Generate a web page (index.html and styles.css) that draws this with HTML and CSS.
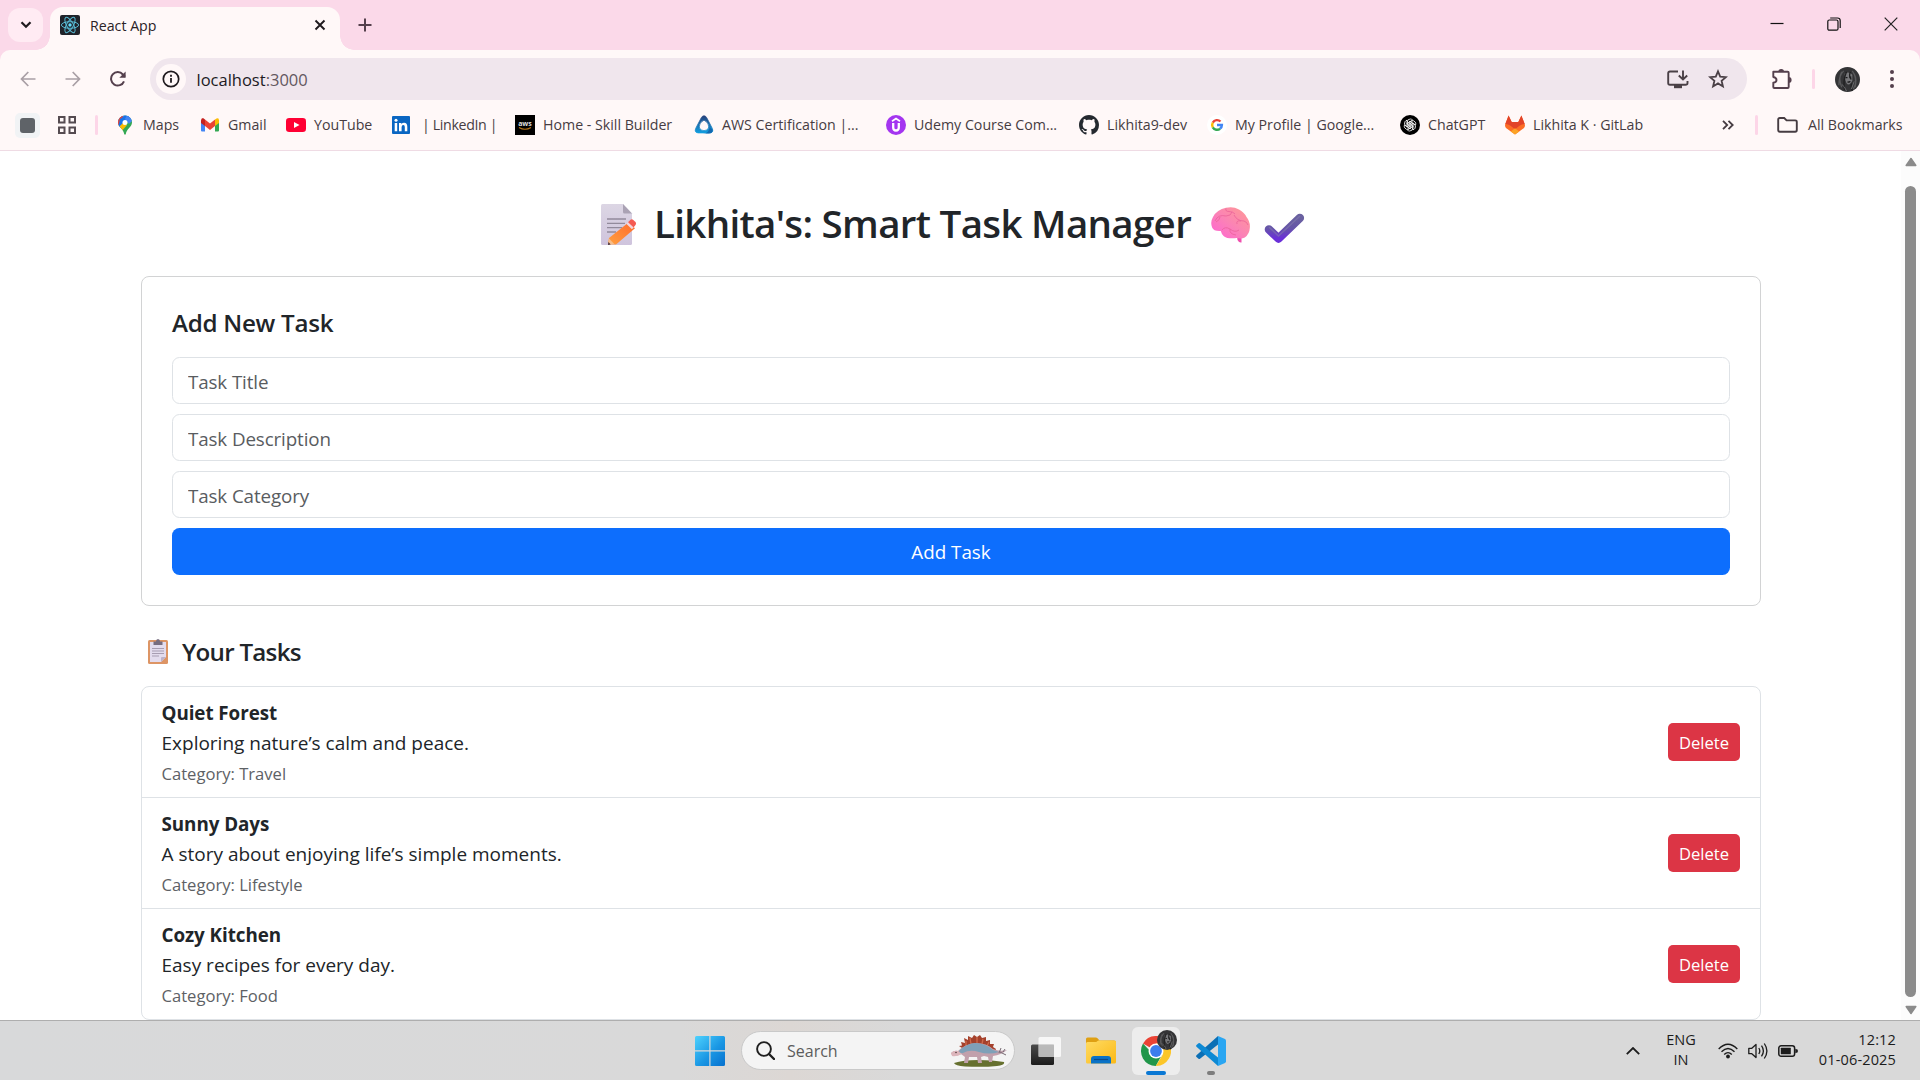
FILE: index.html
```
<!DOCTYPE html>
<html lang="en">
<head>
<meta charset="utf-8">
<title>React App</title>
<link rel="stylesheet" href="styles.css">
</head>
<body>
<svg class="defs" width="0" height="0" aria-hidden="true">
  <defs>
    <symbol id="avatar" viewBox="0 0 26 26">
      <circle cx="13" cy="13" r="13" fill="#343436"/>
      <path d="M9 4Q4 9 4 19M7 5Q3 12 7 21M18 4Q23 11 21 21M20 7Q24 14 19 23" stroke="#5a5a5c" stroke-width="1.300" fill="none"/>
      <path d="M10 7Q14 4 18 8L18 14Q16 19 13 18Q10 15 10 7Z" fill="#77777a"/>
      <path d="M12 5Q8 14 10 24M16 5Q14 10 17 13M17 17Q16 21 18 25" stroke="#202021" stroke-width="1.400" fill="none"/>
      <path d="M11 11h2M15 10.500h2M13 15.500q2 .6 3-.5" stroke="#19191a" stroke-width="1.200"/>
      <path d="M7 18Q10 20 12 25M20 15L17 23" stroke="#6c6c6e" stroke-width="1" fill="none"/>
    </symbol>
    <linearGradient id="brain" x1="1" y1="0" x2="0" y2="1"><stop offset="0" stop-color="#ff9a92"/><stop offset=".5" stop-color="#fb84b4"/><stop offset="1" stop-color="#ff62d6"/></linearGradient>
    <linearGradient id="tick" x1="0" y1="0" x2="0" y2="1"><stop offset="0" stop-color="#6a61a0"/><stop offset=".5" stop-color="#6655a8"/><stop offset="1" stop-color="#6a30d8"/></linearGradient>
    <linearGradient id="paper" x1="0" y1="0" x2="0" y2="1"><stop offset="0" stop-color="#dcd6e4"/><stop offset="1" stop-color="#cfc4dd"/></linearGradient>
    <linearGradient id="pencil" x1="1" y1="0" x2="0" y2="1"><stop offset="0" stop-color="#ff6a2c"/><stop offset="1" stop-color="#ffa040"/></linearGradient>
    <linearGradient id="win" x1="0" y1="0" x2="1" y2="1"><stop offset="0" stop-color="#4fd2fd"/><stop offset=".55" stop-color="#1a97e4"/><stop offset="1" stop-color="#0670ce"/></linearGradient>
    <linearGradient id="folder" x1="0" y1="0" x2="1" y2="1"><stop offset="0" stop-color="#ffdb63"/><stop offset="1" stop-color="#fbb916"/></linearGradient>
    <linearGradient id="dark" x1="0" y1="0" x2="0" y2="1"><stop offset="0" stop-color="#4a4a4a"/><stop offset="1" stop-color="#1c1c1c"/></linearGradient>
    <linearGradient id="cert" x1="0" y1="0" x2="0" y2="1"><stop offset="0" stop-color="#26417c"/><stop offset="1" stop-color="#119ee0"/></linearGradient>
  </defs>
</svg>

<header class="browser">
  <div class="tabstrip">
    <div class="tab-search"><svg width="12" height="8" viewBox="0 0 12 8"><path d="M1.5 1.2L6 5.8l4.500-4.600" fill="none" stroke="#1f1a1e" stroke-width="2.200"/></svg></div>
    <div class="tab">
      <svg width="20" height="20" viewBox="0 0 20 20"><rect width="20" height="20" rx="2" fill="#20232a"/><g fill="none" stroke="#58b9d2" stroke-width="1"><ellipse cx="10" cy="10" rx="8.600" ry="3.300"/><ellipse cx="10" cy="10" rx="8.600" ry="3.300" transform="rotate(60 10 10)"/><ellipse cx="10" cy="10" rx="8.600" ry="3.300" transform="rotate(120 10 10)"/></g><circle cx="10" cy="10" r="1.700" fill="#61dafb"/></svg>
      <span class="tab-title">React App</span>
      <svg width="12" height="12" viewBox="0 0 12 12"><path d="M1.500 1.500l9 9M10.500 1.500l-9 9" stroke="#1f1a1e" stroke-width="1.900"/></svg>
    </div>
    <svg class="new-tab" width="14" height="14" viewBox="0 0 14 14"><path d="M7 .5v13M.5 7h13" stroke="#55404d" stroke-width="2"/></svg>
    <div class="window-buttons">
      <svg width="14" height="14" viewBox="0 0 14 14"><path d="M.5 6.500h13" stroke="#111" stroke-width="1.200"/></svg>
      <svg width="14" height="14" viewBox="0 0 14 14"><g fill="none" stroke="#111" stroke-width="1.200"><rect x=".8" y="3" width="10.200" height="10.200" rx="1.500"/><path d="M3.200 1h7.300q2.700 0 2.700 2.700v7.300"/></g></svg>
      <svg width="14" height="14" viewBox="0 0 14 14"><path d="M.7.7l12.600 12.600M13.300.7L.7 13.300" stroke="#222" stroke-width="1.200"/></svg>
    </div>
  </div>

  <div class="toolbar">
    <svg class="nav" width="16" height="16" viewBox="0 0 16 16"><path d="M15.500 8H1.500M8.300 1L1.500 8l6.800 7" fill="none" stroke="#a99fa5" stroke-width="1.700"/></svg>
    <svg class="nav" width="16" height="16" viewBox="0 0 16 16"><path d="M.5 8h14M7.700 1l6.800 7-6.800 7" fill="none" stroke="#a99fa5" stroke-width="1.700"/></svg>
    <svg class="nav" width="16" height="16" viewBox="0 0 16 16"><path d="M14 10.300A6.700 6.700 0 1 1 12.900 3.500L15 5.700" fill="none" stroke="#55404d" stroke-width="2"/><path d="M15.600.5v6.300H9.300z" fill="#55404d"/></svg>
    <div class="omnibox">
      <div class="info"><svg width="18" height="18" viewBox="0 0 18 18"><circle cx="9" cy="9" r="7.700" fill="none" stroke="#1f1a1e" stroke-width="1.700"/><path d="M9 8v4.800M9 4.800v1.900" stroke="#1f1a1e" stroke-width="1.800"/></svg></div>
      <span class="url">localhost<span>:3000</span></span>
      <svg width="22" height="19" viewBox="0 0 22 19"><path d="M11 1.500H3Q1.200 1.500 1.200 3.300v9.600q0 1.800 1.800 1.800h15.500q2 0 2-1.800v-2M16 .5v8.500M11.800 5.500L16 9.500l4.200-4" fill="none" stroke="#4a4046" stroke-width="1.900"/><path d="M7 15h8v3.200H7z" fill="#4a4046"/></svg>
      <svg class="star" width="20" height="20" viewBox="0 0 20 20"><path d="M10 2.300l2.200 5.300 5.700.5-4.300 3.700 1.300 5.600-4.900-3-4.900 3 1.300-5.600L2.100 8.100l5.700-.5z" fill="none" stroke="#4a4046" stroke-width="1.800"/></svg>
    </div>
    <svg class="puzzle" width="22" height="22" viewBox="0 0 22 22"><path d="M2.300 3.800h14.400q1 0 1 1V19q0 1-1 1H3.300q-1 0-1-1v-4.300Q5.500 14.300 5.500 12T2.300 9z" fill="none" stroke="#55404d" stroke-width="1.900" stroke-linejoin="round"/><path d="M7.300 3.800a2.900 2.900 0 0 1 5.800 0zM17.700 9a2.900 2.900 0 0 1 0 5.800z" fill="#55404d"/></svg>
    <i class="divider"></i>
    <svg class="profile" width="25" height="25"><use href="#avatar"/></svg>
    <svg width="4" height="18" viewBox="0 0 4 18" fill="#55404d"><circle cx="2" cy="2" r="2"/><circle cx="2" cy="9" r="2"/><circle cx="2" cy="16" r="2"/></svg>
  </div>

  <nav class="bookmarks">
    <span class="group"><i></i></span>
    <svg width="18" height="18" viewBox="0 0 18 18" fill="none" stroke="#554b50" stroke-width="2"><path d="M1 1h5.500v5.500H1zM11.500 1H17v5.500h-5.500zM1 11.500h5.500V17H1zM11.500 11.500H17V17h-5.500z"/></svg>
    <i class="divider"></i>
    <a><svg width="20" height="20" viewBox="0 0 20 20"><clipPath id="pin"><path d="M10 .5a7 7 0 0 1 7 7c0 4.500-5.500 6-6.300 12h-1.400C8.500 13.500 3 12 3 7.500a7 7 0 0 1 7-7z"/></clipPath><g clip-path="url(#pin)"><path d="M0 0h20v20H0z" fill="#34a853"/><path d="M0 0h20L3 16H0z" fill="#4285f4"/><path d="M0 0h7l3 6-7 6z" fill="#ea4335"/><path d="M3 13L15 1 10 .5 5 4z" fill="#1a73e8"/><path d="M3 13l5-5 4 2-6 7z" fill="#fbbc04"/><path d="M12 0l6 5-4 4-4-5z" fill="#4285f4"/></g><circle cx="10" cy="7.500" r="2.500" fill="#fff"/></svg><span>Maps</span></a>
    <a><svg width="20" height="20" viewBox="0 0 20 20"><path d="M1 5v10.500q0 1 1 1h3V8z" fill="#4285f4"/><path d="M15 8v8.500h3q1 0 1-1V5z" fill="#34a853"/><path d="M1 5.500Q1 3 3 3l2 1.500V11L1 8z" fill="#c5221f"/><path d="M5 4.500l5 4 5-4V11l-5 4-5-4z" fill="#ea4335"/><path d="M15 4.500Q19 1.500 19 5.500V8l-4 3z" fill="#fbbc04"/></svg><span>Gmail</span></a>
    <a><svg width="20" height="20" viewBox="0 0 20 20"><rect y="3" width="20" height="14" rx="3.200" fill="#ff0033"/><path d="M8 7l5.500 3L8 13z" fill="#fff"/></svg><span>YouTube</span></a>
    <a class="linkedin"><svg width="20" height="20" viewBox="0 0 20 20"><rect x="1" y="1" width="18" height="18" rx="1" fill="#0a66c2"/><path d="M3.700 8h2.500v8.300H3.700zM8 8h2.400v1.200q.8-1.400 2.700-1.400 3.200 0 3.200 4v4.500h-2.500v-4.200q0-2.100-1.500-2.100-1.700 0-1.700 2.200v4.100H8z" fill="#fff"/><circle cx="5" cy="5.300" r="1.500" fill="#fff"/></svg><span>| LinkedIn |</span></a>
    <a><svg width="20" height="20" viewBox="0 0 20 20"><path d="M0 0h20v20H0z" fill="#000"/><text x="10" y="11" text-anchor="middle" class="aws">aws</text><path d="M4 12.500q6 3.500 12 0" fill="none" stroke="#b87416" stroke-width="1.200"/></svg><span>Home - Skill Builder</span></a>
    <a><svg width="20" height="20" viewBox="0 0 20 20"><path d="M10 .8q1.700 0 2.700 1.900l5.500 10.500q1.900 4.300-2.400 4.700H4.200Q-.1 17.500 1.800 13.200L7.300 2.700Q8.300.8 10 .8zM10 5Q4.800 7.800 5.200 12q.5 3.700 4.800 3.700t4.800-3.700Q15.200 7.800 10 5z" fill="url(#cert)" fill-rule="evenodd" stroke="url(#cert)" stroke-width=".8"/><path d="M18.600 14.500q.6 4-4 4H9q6 0 6.500-6z" fill="#1268b0"/></svg><span>AWS Certification |...</span></a>
    <a><svg width="20" height="20" viewBox="0 0 20 20"><circle cx="10" cy="10" r="10" fill="#a435f0"/><path d="M6 6.200l4-2.700 4 2.700" fill="none" stroke="#fff" stroke-width="1.700"/><path d="M7.200 8v4.500q0 3 2.800 3t2.800-3V8" fill="none" stroke="#fff" stroke-width="2.300"/></svg><span>Udemy Course Com...</span></a>
    <a><svg width="20" height="20" viewBox="0 0 16 16"><path fill="#24292f" d="M8 0C3.580 0 0 3.580 0 8c0 3.540 2.290 6.530 5.470 7.590.4.070.55-.17.55-.38 0-.19-.01-.82-.01-1.490-2.010.37-2.530-.49-2.690-.94-.09-.23-.48-.94-.82-1.130-.28-.15-.68-.52-.01-.53.63-.01 1.080.58 1.230.82.720 1.210 1.870.87 2.330.66.070-.52.280-.87.510-1.070-1.780-.2-3.640-.89-3.640-3.950 0-.87.310-1.590.82-2.150-.08-.2-.36-1.020.08-2.120 0 0 .67-.21 2.200.82.640-.18 1.320-.27 2-.27s1.360.09 2 .27c1.530-1.040 2.200-.82 2.200-.82.44 1.100.16 1.920.08 2.120.51.560.82 1.270.82 2.150 0 3.070-1.870 3.750-3.650 3.950.29.250.54.730.54 1.480 0 1.070-.01 1.930-.01 2.200 0 .21.150.46.55.38A8.010 8.010 0 0 0 16 8c0-4.420-3.580-8-8-8z"/></svg><span>Likhita9-dev</span></a>
    <a><svg width="20" height="20" viewBox="0 0 20 20"><circle cx="10" cy="10" r="10" fill="#fff"/><g fill="none" stroke-width="2.400"><path d="M13.500 6.500A4.900 4.900 0 0 0 5.800 7.600" stroke="#ea4335"/><path d="M5.800 7.600a4.900 4.900 0 0 0 0 4.800" stroke="#fbbc04"/><path d="M5.800 12.400a4.900 4.900 0 0 0 7.300 1.300" stroke="#34a853"/><path d="M13.100 13.700Q14.900 12.200 14.900 10H10" stroke="#4285f4"/></g></svg><span>My Profile | Google...</span></a>
    <a><svg width="20" height="20" viewBox="0 0 20 20"><circle cx="10" cy="10" r="10" fill="#000"/><g fill="none" stroke="#fff" stroke-width=".8"><g id="petal"><path d="M7.200 12.500V7.300Q7.300 4 10.300 4q1.500.1 2.400 1.100L9 7.300v4"/></g><use href="#petal" transform="rotate(60 10 10)"/><use href="#petal" transform="rotate(120 10 10)"/><use href="#petal" transform="rotate(180 10 10)"/><use href="#petal" transform="rotate(240 10 10)"/><use href="#petal" transform="rotate(300 10 10)"/></g></svg><span>ChatGPT</span></a>
    <a><svg width="20" height="20" viewBox="0 0 20 20"><path d="M10 19.500L1 13Q-.5 11.500.3 9L3.600.5 6.700 7h6.600L16.400.5 19.700 9q.8 2.500-.7 4z" fill="#fc6d26"/><path d="M.3 9L3.600.5 6.700 7h6.600L16.400.5 19.700 9q-3 .2-5.200 1.800L10 14.300l-4.500-3.500Q3.300 9.200.3 9z" fill="#e24329"/><path d="M10 13.200l4.300 3.200L10 19.500l-4.300-3.100z" fill="#fca326"/></svg><span>Likhita K · GitLab</span></a>
    <svg class="more" width="12" height="10" viewBox="0 0 12 10"><path d="M1 .8L5.200 5 1 9.200M6.500.8L10.700 5 6.500 9.200" fill="none" stroke="#463c42" stroke-width="1.800"/></svg>
    <i class="divider"></i>
    <span class="all"><svg width="21" height="16" viewBox="0 0 21 16"><path d="M1.200 13V2.500Q1.200 1 2.800 1h4.400l2.400 2.400h8.600q1.600 0 1.600 1.500V13q0 1.700-1.600 1.700H2.800Q1.200 14.700 1.200 13z" fill="none" stroke="#463c42" stroke-width="1.900"/></svg><span>All Bookmarks</span></span>
  </nav>
</header>

<div class="viewport">
  <main class="page">
    <h1>
      <svg class="memo" width="35" height="41" viewBox="0 0 35 41"><path d="M0 1.500Q0 0 1.500 0H22l9 9.500V39.500Q31 41 29.500 41h-28Q0 41 0 39.500z" fill="url(#paper)"/><path d="M22 0l9 9.500h-7.500Q22 9.500 22 8z" fill="#aaa2b4"/><path d="M6 15h19M6 19.300h18M6 23.600h15M6 28h9" stroke="#928a9c" stroke-width="1.300"/><path d="M27.500 18.500l6.500 5.700L15 40.500 7 40l1-6z" fill="url(#pencil)"/><path d="M27 18.200l2.500-2.500q1.500-1 2.800.2l2.200 2.200q1 1.500 0 2.800L32 24z" fill="#f55b52"/><path d="M25.300 19.800l1.700-1.600 5.700 5.300-1.800 1.800z" fill="#f3d6dc"/><path d="M8 34.500l5.500 5.700L7 41z" fill="#f6bd8a"/><path d="M7.400 38l2.300 2.600L7 41z" fill="#42303f"/></svg>
      <span>Likhita's: Smart Task Manager</span>
      <svg class="brain" width="40" height="36" viewBox="0 0 40 36"><path d="M26 29l4.500 1v5.500Q28 36 26.500 33z" fill="#f04fae"/><path d="M15 .8Q22-1 28 2.500q5 2.500 7.500 7.500 4 5 3.300 11-.3 6-5 9.500-3 1.500-8 .5-5 .5-9.500 0-5-1.500-6.500-7-7 .5-8.700-3.500Q-1 15 2 10 6 2.500 15 .8z" fill="url(#brain)"/><path d="M4 14q3-7 11-5 5 0 6-4M15 1.500q-1 3 3 3t6 2.500M23 8q3 6 10 6 3 1 4 4M30 14q-5-1-4 3M11 23q3-4 8-1 5 4 9 1M19 22q-1 5 6 6M9 10q0 3-4 5" fill="none" stroke="#ea6098" stroke-width="1" opacity=".75"/></svg>
      <svg class="tick" width="41" height="31" viewBox="0 0 41 31"><path d="M5 16.500l9.500 9L35.800 5" fill="none" stroke="url(#tick)" stroke-width="8.600" stroke-linecap="round" stroke-linejoin="round"/><path d="M5.500 14.500l9 8.500L35.500 3.500" fill="none" stroke="#8880b0" stroke-width="1.500" stroke-linecap="round" opacity=".5"/></svg>
    </h1>

    <form class="card">
      <h2>Add New Task</h2>
      <input type="text" placeholder="Task Title">
      <input type="text" placeholder="Task Description">
      <input type="text" placeholder="Task Category">
      <button type="button">Add Task</button>
    </form>

    <h2 class="list-title">
      <svg width="20" height="25" viewBox="0 0 20 25"><rect y="1" width="20" height="24" rx="1.500" fill="#dd9565"/><path d="M2 3h16v15l-5 5H2z" fill="#e3dcee"/><path d="M18 18l-5 5v-4q0-1 1-1z" fill="#bdb2ca"/><path d="M5.500 2.500H8Q8 0 10 0t2 2.500h2.500V6h-9z" fill="#776d80"/><path d="M4 9.500h12M4 12h12M4 14.500h12M4 17h7" stroke="#a79db2" stroke-width="1"/></svg>
      <span>Your Tasks</span>
    </h2>
    <ul class="tasks">
      <li><div><strong>Quiet Forest</strong><p>Exploring nature’s calm and peace.</p><small>Category: Travel</small></div><button type="button">Delete</button></li>
      <li><div><strong>Sunny Days</strong><p>A story about enjoying life’s simple moments.</p><small>Category: Lifestyle</small></div><button type="button">Delete</button></li>
      <li><div><strong>Cozy Kitchen</strong><p>Easy recipes for every day.</p><small>Category: Food</small></div><button type="button">Delete</button></li>
    </ul>
  </main>
  <div class="scrollbar">
    <svg width="12" height="10" viewBox="0 0 12 10"><path d="M6 1.500L10.800 8.500H1.200z" fill="#8b8b8b" stroke="#8b8b8b" stroke-width="1.500" stroke-linejoin="round"/></svg>
    <i></i>
    <svg width="12" height="10" viewBox="0 0 12 10"><path d="M6 8.500L1.200 1.500h9.600z" fill="#8b8b8b" stroke="#8b8b8b" stroke-width="1.500" stroke-linejoin="round"/></svg>
  </div>
</div>

<footer class="taskbar">
  <div class="apps">
    <svg width="30" height="30" viewBox="0 0 30 30"><path d="M1.500 0h12.800v14.300H0V1.500Q0 0 1.500 0zM15.500 0h13Q30 0 30 1.500v12.800H15.500zM0 15.500h14.300V30H1.500Q0 30 0 28.500zM15.500 15.500H30v13q0 1.500-1.500 1.500h-13z" fill="url(#win)"/></svg>
    <div class="search">
      <svg width="19" height="19" viewBox="0 0 19 19"><circle cx="8" cy="8" r="6.900" fill="none" stroke="#1f1f1f" stroke-width="1.900"/><path d="M13 13l5 5" stroke="#1f1f1f" stroke-width="2.400" stroke-linecap="round"/></svg>
      <span>Search</span>
      <svg width="57" height="32" viewBox="0 0 57 32"><path d="M3 28q9-3 24-3t26 2q1 3-7 4-15 1.500-32 .4-10-.6-11-3.400z" fill="#66702f"/><path d="M11 13l-3-2 3-.5-1-3.500 4 1-1-5 4 2 0-4 4 2 2-3 3 2 3-2 2 3 4-1 0 4 4-1 0 4 4 0-1 3 3 2-1 3q-15-8-30-2z" fill="#a4412c"/><path d="M15 11l0-5M20 9l-1-6M26 8V2M31 9l1-5M36 11l2-4" stroke="#cf6a4c" stroke-width="1.300"/><path d="M0 18q3-3 7-2 7-7 17-8 12 0 18 6 7 3 14 1-6 5-14 6l-1 6h-3l-1-5-4-1-3 1 1 6h-4l-1-6H18l-1 6h-4l1-6-4-3q-5 3-9 1z" fill="#c1a0ac"/><path d="M8 16Q16 8 25 8q11 1 17 7l6 2q-10 3-20 0-9-3-16 1-4 1-4-2z" fill="#7fa0b8"/><path d="M0 18q3-3 7-2l4 3q-6 3-10 2z" fill="#dcb5bb"/><path d="M48 18l2-5M52 17l2-3M49 17l6 3" stroke="#766a73" stroke-width="1"/><circle cx="5" cy="17.500" r=".7" fill="#322"/></svg>
    </div>
    <svg class="taskview" width="30" height="28" viewBox="0 0 30 28"><rect y="7.500" width="23" height="20.500" rx="1.500" fill="url(#dark)"/><rect x="7.500" width="22.500" height="20" rx="1.500" fill="#fff" opacity=".78"/><path d="M7.500 7.500H23V20H7.500z" fill="#aaa" opacity=".65"/></svg>
    <svg class="folder" width="30" height="27" viewBox="0 0 30 27"><path d="M0 2Q0 .5 1.500.5h8.300q1 0 1.700.8L13.500 3.500H28q2 0 2 2V12H0z" fill="#dfa013"/><path d="M0 6.500Q0 5 1.500 5h8.700l2-1.500H28.500Q30 3.500 30 5v20q0 1.500-1.500 1.500h-27Q0 26.500 0 25z" fill="url(#folder)"/><path d="M5 26.500V22q0-3 3-3h14q3 0 3 3v4.500z" fill="#0a72c6"/><path d="M8 22.500h14" stroke="#0a4a8a" stroke-width="1.200"/></svg>
    <div class="app active">
      <svg width="30" height="30" viewBox="0 0 30 30"><path d="M15 15L2 7.500A15 15 0 0 1 28 7.500H15z" fill="#ea4335"/><path d="M15 15h-6L2 7.500A15 15 0 0 0 14.800 30l6-11z" fill="#21964a"/><path d="M15 7.500H28A15 15 0 0 1 14.800 30l6.700-11z" fill="#fcc629"/><circle cx="15" cy="15" r="7.500" fill="#fff"/><circle cx="15" cy="15" r="5.900" fill="#3c7ded"/></svg>
      <svg class="app-badge" width="20" height="20"><use href="#avatar"/></svg>
      <i class="running"></i>
    </div>
    <div class="app">
      <svg width="30" height="30" viewBox="0 0 30 30"><path d="M22 0l7 3q1 .5 1 1.700v20.600q0 1.200-1 1.700l-7 3z" fill="#2aa6f2"/><path d="M22 0v8.500L4 22.700q-.8.500-1.500 0L.5 21q-.8-.8 0-1.700z" fill="#0b6fb5"/><path d="M22 30v-8.500L4 7.300q-.8-.5-1.500 0L.5 9q-.8.800 0 1.700z" fill="#0d89d4"/></svg>
      <i class="running idle"></i>
    </div>
  </div>
  <div class="tray">
    <svg class="chev" width="14" height="8" viewBox="0 0 14 8"><path d="M.8 7.200L7 1l6.200 6.200" fill="none" stroke="#1c1c1c" stroke-width="1.800"/></svg>
    <div class="lang">ENG<br>IN</div>
    <svg class="wifi" width="20" height="16" viewBox="0 0 20 16"><g fill="none" stroke="#1c1c1c" stroke-width="1.400"><path d="M.7 6Q10-3.500 19.300 6"/><path d="M3.500 8.800q6.500-6.500 13 0"/><path d="M6.200 11.500q3.800-3.800 7.600 0"/></g><circle cx="10" cy="13.500" r="1.900" fill="#1c1c1c"/></svg>
    <svg class="sound" width="20" height="18" viewBox="0 0 20 18"><g fill="none" stroke="#1c1c1c" stroke-width="1.300"><path d="M.8 6.300h3L8 2.500v13l-4.200-3.800h-3z" stroke-linejoin="round"/><path d="M10.800 6q2 3 0 6M13.500 3.700q3.800 5.300 0 10.600M16.300 1.500q5.200 7.500 0 15"/></g></svg>
    <svg class="battery" width="20" height="12" viewBox="0 0 20 12"><rect x=".8" y=".8" width="15.800" height="10.400" rx="2.300" fill="none" stroke="#1c1c1c" stroke-width="1.500"/><rect x="2.800" y="2.700" width="10" height="6.600" rx=".5" fill="#1c1c1c"/><path d="M17.300 3.800l2.500 1v2.400l-2.500 1z" fill="#1c1c1c"/></svg>
    <div class="clock">12:12<br>01-06-2025</div>
  </div>
</footer>
</body>
</html>
```
FILE: styles.css
```
* { box-sizing: border-box; }

body {
  margin: 0;
  width: 1920px;
  height: 1080px;
  overflow: hidden;
  display: flex;
  flex-direction: column;
  background: #fff;
  color: #212529;
  font-family: "Open Sans", "Noto Sans", sans-serif;
}

svg { display: block; flex: none; }
.defs { position: absolute; }
h1, h2, p, ul { margin: 0; padding: 0; }
button, input { font-family: inherit; }

/* Browser chrome */
.browser {
  height: 151px;
  background: #fbd9e9;
  border-bottom: 1px solid #efdbe4;
  font-size: 14.2px;
}
.tabstrip { display: flex; align-items: flex-start; height: 50px; padding-left: 8px; }
.tab-search {
  display: grid;
  place-items: center;
  width: 35px;
  height: 34px;
  margin-top: 8px;
  border-radius: 12px;
  background: #ffebf3;
}
.tab {
  position: relative;
  display: flex;
  align-items: center;
  width: 290px;
  height: 43px;
  margin: 7px 0 0 7px;
  padding: 0 14px 7px 10px;
  border-radius: 13px 13px 0 0;
  background: #fff8f8;
  color: #2a2227;
}
.tab::before, .tab::after {
  content: "";
  position: absolute;
  bottom: 0;
  width: 14px;
  height: 14px;
}
.tab::before { left: -14px; background: radial-gradient(circle at 0 0, transparent 13.5px, #fff8f8 14px); }
.tab::after { right: -14px; background: radial-gradient(circle at 100% 0, transparent 13.5px, #fff8f8 14px); }
.tab-title { flex: 1; margin-left: 10px; }
.new-tab { margin: 18px 0 0 18px; }
.window-buttons { display: flex; gap: 43px; margin: 17px 22px 0 auto; }

.toolbar {
  display: flex;
  align-items: center;
  height: 58px;
  padding-left: 20px;
  border-radius: 10px 10px 0 0;
  background: #fff8f8;
}
.nav { margin-right: 29px; }
.nav:nth-child(3) { margin-right: 24px; }
.omnibox {
  display: flex;
  align-items: center;
  width: 1597px;
  height: 42px;
  padding: 0 19px 0 6px;
  border-radius: 21px;
  background: #f0e6ed;
}
.info {
  display: grid;
  place-items: center;
  width: 30px;
  height: 30px;
  border-radius: 50%;
  background: #fff8f8;
}
.url { flex: 1; margin-left: 10.5px; font-size: 16.5px; color: #211a1f; }
.url span { color: #63575f; }
.star { margin-left: 19px; }
.puzzle { margin-left: 24px; }
.divider { width: 3px; height: 20px; border-radius: 2px; background: #fdd6e8; }
.toolbar .divider { margin-left: 19px; }
.profile { margin: 0 30px 0 20px; }

.bookmarks {
  display: grid;
  grid-template-columns: 43px 37px 20px 85px 86px 105px 124px 179px 192px 193px 128px 193px 105px 217px 33px 22px auto;
  align-items: center;
  height: 42px;
  padding: 0 0 8px 15px;
  background: #fff8f8;
  color: #463c42;
}
.bookmarks a, .all { display: flex; align-items: center; gap: 8px; white-space: nowrap; }
.bookmarks a > span, .all > span { padding-bottom: 2px; }
.bookmarks .linkedin { gap: 11px; letter-spacing: -.35px; }
.bookmarks .all { gap: 10px; }
.group {
  display: grid;
  place-items: center;
  width: 25px;
  height: 25px;
  border-radius: 5px;
  background: #f1f3f5;
}
.group i { width: 15px; height: 15px; border-radius: 3px; background: #5f6368; }
.aws { font: bold 7px "Open Sans", sans-serif; fill: #ddd; }

/* Page */
.viewport { display: flex; height: 869px; }
.page { flex: 1; padding: 48px 140px 0 141px; }
h1 {
  display: flex;
  height: 48px;
  margin-left: 460px;
  font-size: 38.5px;
  font-weight: 600;
  letter-spacing: -.68px;
  line-height: 48px;
  white-space: nowrap;
}
h1 span { width: 537px; margin-left: 18px; }
.memo { margin-top: 5px; }
.brain { margin: 8px 0 0 20px; }
.tick { margin: 14px 0 0 13px; }

.card {
  display: flex;
  flex-direction: column;
  gap: 10px;
  margin-top: 29px;
  padding: 30px;
  border: 1px solid #d2d3d4;
  border-radius: 8px;
}
h2 { font-size: 24.2px; font-weight: 600; line-height: 31px; letter-spacing: -.28px; }
.card h2 { margin-bottom: 9px; }
.card input {
  height: 47px;
  padding: 2px 15px 0;
  border: 1px solid #dee2e6;
  border-radius: 7.5px;
  font-size: 18.8px;
  letter-spacing: -.12px;
}
.card input::placeholder { color: #595c5f; opacity: 1; }
.card button {
  height: 47px;
  padding: 1px 0 0;
  border: 0;
  border-radius: 7.5px;
  background: #0d6efd;
  color: #fff;
  font-size: 18.8px;
}
.list-title {
  display: flex;
  align-items: center;
  gap: 14px;
  margin: 30px 0 19px 7px;
  letter-spacing: -.75px;
}

.tasks { border: 1px solid #dee2e6; border-radius: 8px; list-style: none; }
.tasks li {
  display: flex;
  justify-content: space-between;
  align-items: center;
  height: 111px;
  padding: 0 20px 0 19.5px;
  border-bottom: 1px solid #dee2e6;
  font-size: 19px;
  line-height: 30px;
}
.tasks li > div { padding-top: 2px; }
.tasks li:last-child { height: 110px; border-bottom: 0; }
.tasks strong { display: block; font-weight: 700; font-size: 18.8px; letter-spacing: -.05px; }
.tasks small { display: block; padding-top: 1px; margin-bottom: -1px; color: #5d6165; font-size: 16.6px; }
.tasks button {
  width: 72px;
  height: 38px;
  padding: 0;
  border: 0;
  border-radius: 5px;
  background: #dc3545;
  color: #fff;
  font-size: 16.6px;
}

.scrollbar {
  display: flex;
  flex-direction: column;
  align-items: center;
  width: 19px;
  padding: 6px 0 5px;
  background: #fcfcfc;
}
.scrollbar i { width: 11px; height: 811px; margin: 19px 0 8px; border-radius: 6px; background: #8b8b8b; }

/* Taskbar */
.taskbar {
  position: relative;
  display: flex;
  justify-content: space-between;
  height: 60px;
  border-top: 1px solid #aeaeae;
  background: linear-gradient(90deg, #d8d9da 0, #d9d9d9 680px, #dcd7d4 790px, #d9d9d9 900px);
  color: #1c1c1c;
}
.apps { display: flex; align-items: center; margin-left: 695px; }
.search {
  display: flex;
  align-items: center;
  width: 274px;
  height: 39px;
  margin: 0 16px;
  padding: 0 6px 0 14px;
  border: 1px solid #c9c9c9;
  border-radius: 20px;
  background: #f4f4f4;
  color: #5c5c5c;
  font-size: 16px;
}
.search span { flex: 1; margin-left: 12px; }
.folder { margin: 0 16px 0 25px; }
.app {
  position: relative;
  display: grid;
  place-items: center;
  width: 48px;
  height: 48px;
  margin-right: 7px;
  border-radius: 6px;
}
.active { background: #ededed; }
.app-badge { position: absolute; top: 3px; right: 3px; }
.running { position: absolute; bottom: 0; left: 14px; width: 20px; height: 4px; border-radius: 2px; background: #0a78d4; }
.idle { left: 20px; width: 8px; background: #7d7d7d; }

.tray { display: flex; align-items: center; font-size: 14.5px; line-height: 20px; }
.chev { margin-right: 26px; }
.lang { width: 30px; padding-bottom: 2px; text-align: center; }
.wifi { margin-left: 22px; }
.sound { margin: 0 10px; }
.clock { width: 98px; margin-right: 24px; padding-bottom: 2px; text-align: right; letter-spacing: .15px; }
```
